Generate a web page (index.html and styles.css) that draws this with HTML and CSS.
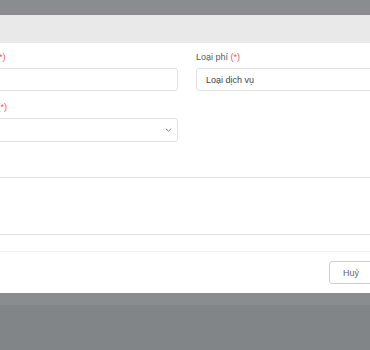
FILE: index.html
```html
<!DOCTYPE html>
<html lang="vi">
<head>
<meta charset="utf-8">
<title>Phí</title>
<link rel="stylesheet" href="styles.css">
</head>
<body>
<div class="backdrop-top"></div>
<div class="modal">
  <div class="modal-header"></div>
  <div class="modal-body">
    <div class="form-grid">
      <div class="field">
        <label class="label">Tên phí <span class="req">(*)</span></label>
        <div class="input"></div>
      </div>
      <div class="field">
        <label class="label">Loại phí <span class="req">(*)</span></label>
        <div class="input"><span class="value">Loại dịch vụ</span></div>
      </div>
      <div class="field">
        <label class="label">Đơn giá <span class="req">(*)</span></label>
        <div class="input select">
          <svg class="chevron" width="7" height="4" viewBox="0 0 7 4"><path d="M0.8 0.6 L3.5 3.2 L6.2 0.6" fill="none" stroke="#7a7a7a" stroke-width="1"/></svg>
        </div>
      </div>
    </div>
    <div class="section"></div>
  </div>
  <div class="modal-footer">
    <button class="btn">Huỷ</button>
  </div>
</div>
<div class="backdrop-strip"></div>
<div class="backdrop-bottom"></div>
</body>
</html>
```
FILE: styles.css
```css
html, body {
  margin: 0;
  padding: 0;
}
body {
  width: 370px;
  height: 350px;
  overflow: hidden;
  background: #818588;
  font-family: "Liberation Sans", Arial, sans-serif;
  font-size: 9px;
  color: #555;
}
.backdrop-top {
  height: 15px;
  background: #898d90;
}
.modal {
  margin-left: -57px;
  width: 488px;
  background: #fff;
}
.modal-header {
  height: 28px;
  background: #e9e9e9;
}
.modal-body {
  padding-top: 9px;
}
.form-grid {
  display: grid;
  grid-template-columns: 215px 215px;
  column-gap: 18px;
  row-gap: 11px;
  padding: 0 20px;
}
.field {
  display: flex;
  flex-direction: column;
}
.label {
  display: block;
  height: 11px;
  line-height: 11px;
  margin-bottom: 5px;
  color: #5a5a5a;
}
.req {
  color: #f0555a;
}
.input {
  box-sizing: border-box;
  height: 23px;
  border: 1px solid #e2e2e2;
  border-radius: 3px;
  display: flex;
  align-items: center;
  padding: 0 9px;
  color: #444;
}
.select {
  height: 24px;
  justify-content: flex-end;
  padding-right: 5px;
}
.chevron {
  display: block;
}
.section {
  margin-top: 35px;
  height: 56px;
  border-top: 1px solid #e2e2e2;
  border-bottom: 1px solid #e2e2e2;
}
.modal-footer {
  margin-top: 16px;
  border-top: 1px solid #f3f3f3;
  padding: 9px 0 9px 0;
  display: flex;
  padding-left: 386px;
}
.btn {
  box-sizing: border-box;
  height: 23px;
  width: 44px;
  background: #fff;
  border: 1px solid #cfcfcf;
  border-radius: 3px;
  font-family: "Liberation Sans", Arial, sans-serif;
  font-size: 9px;
  color: #666;
  padding: 0 0 0 0;
}
.backdrop-strip {
  height: 12px;
  background: #898d90;
}
.backdrop-bottom {
  height: 60px;
  background: #818588;
}
```
